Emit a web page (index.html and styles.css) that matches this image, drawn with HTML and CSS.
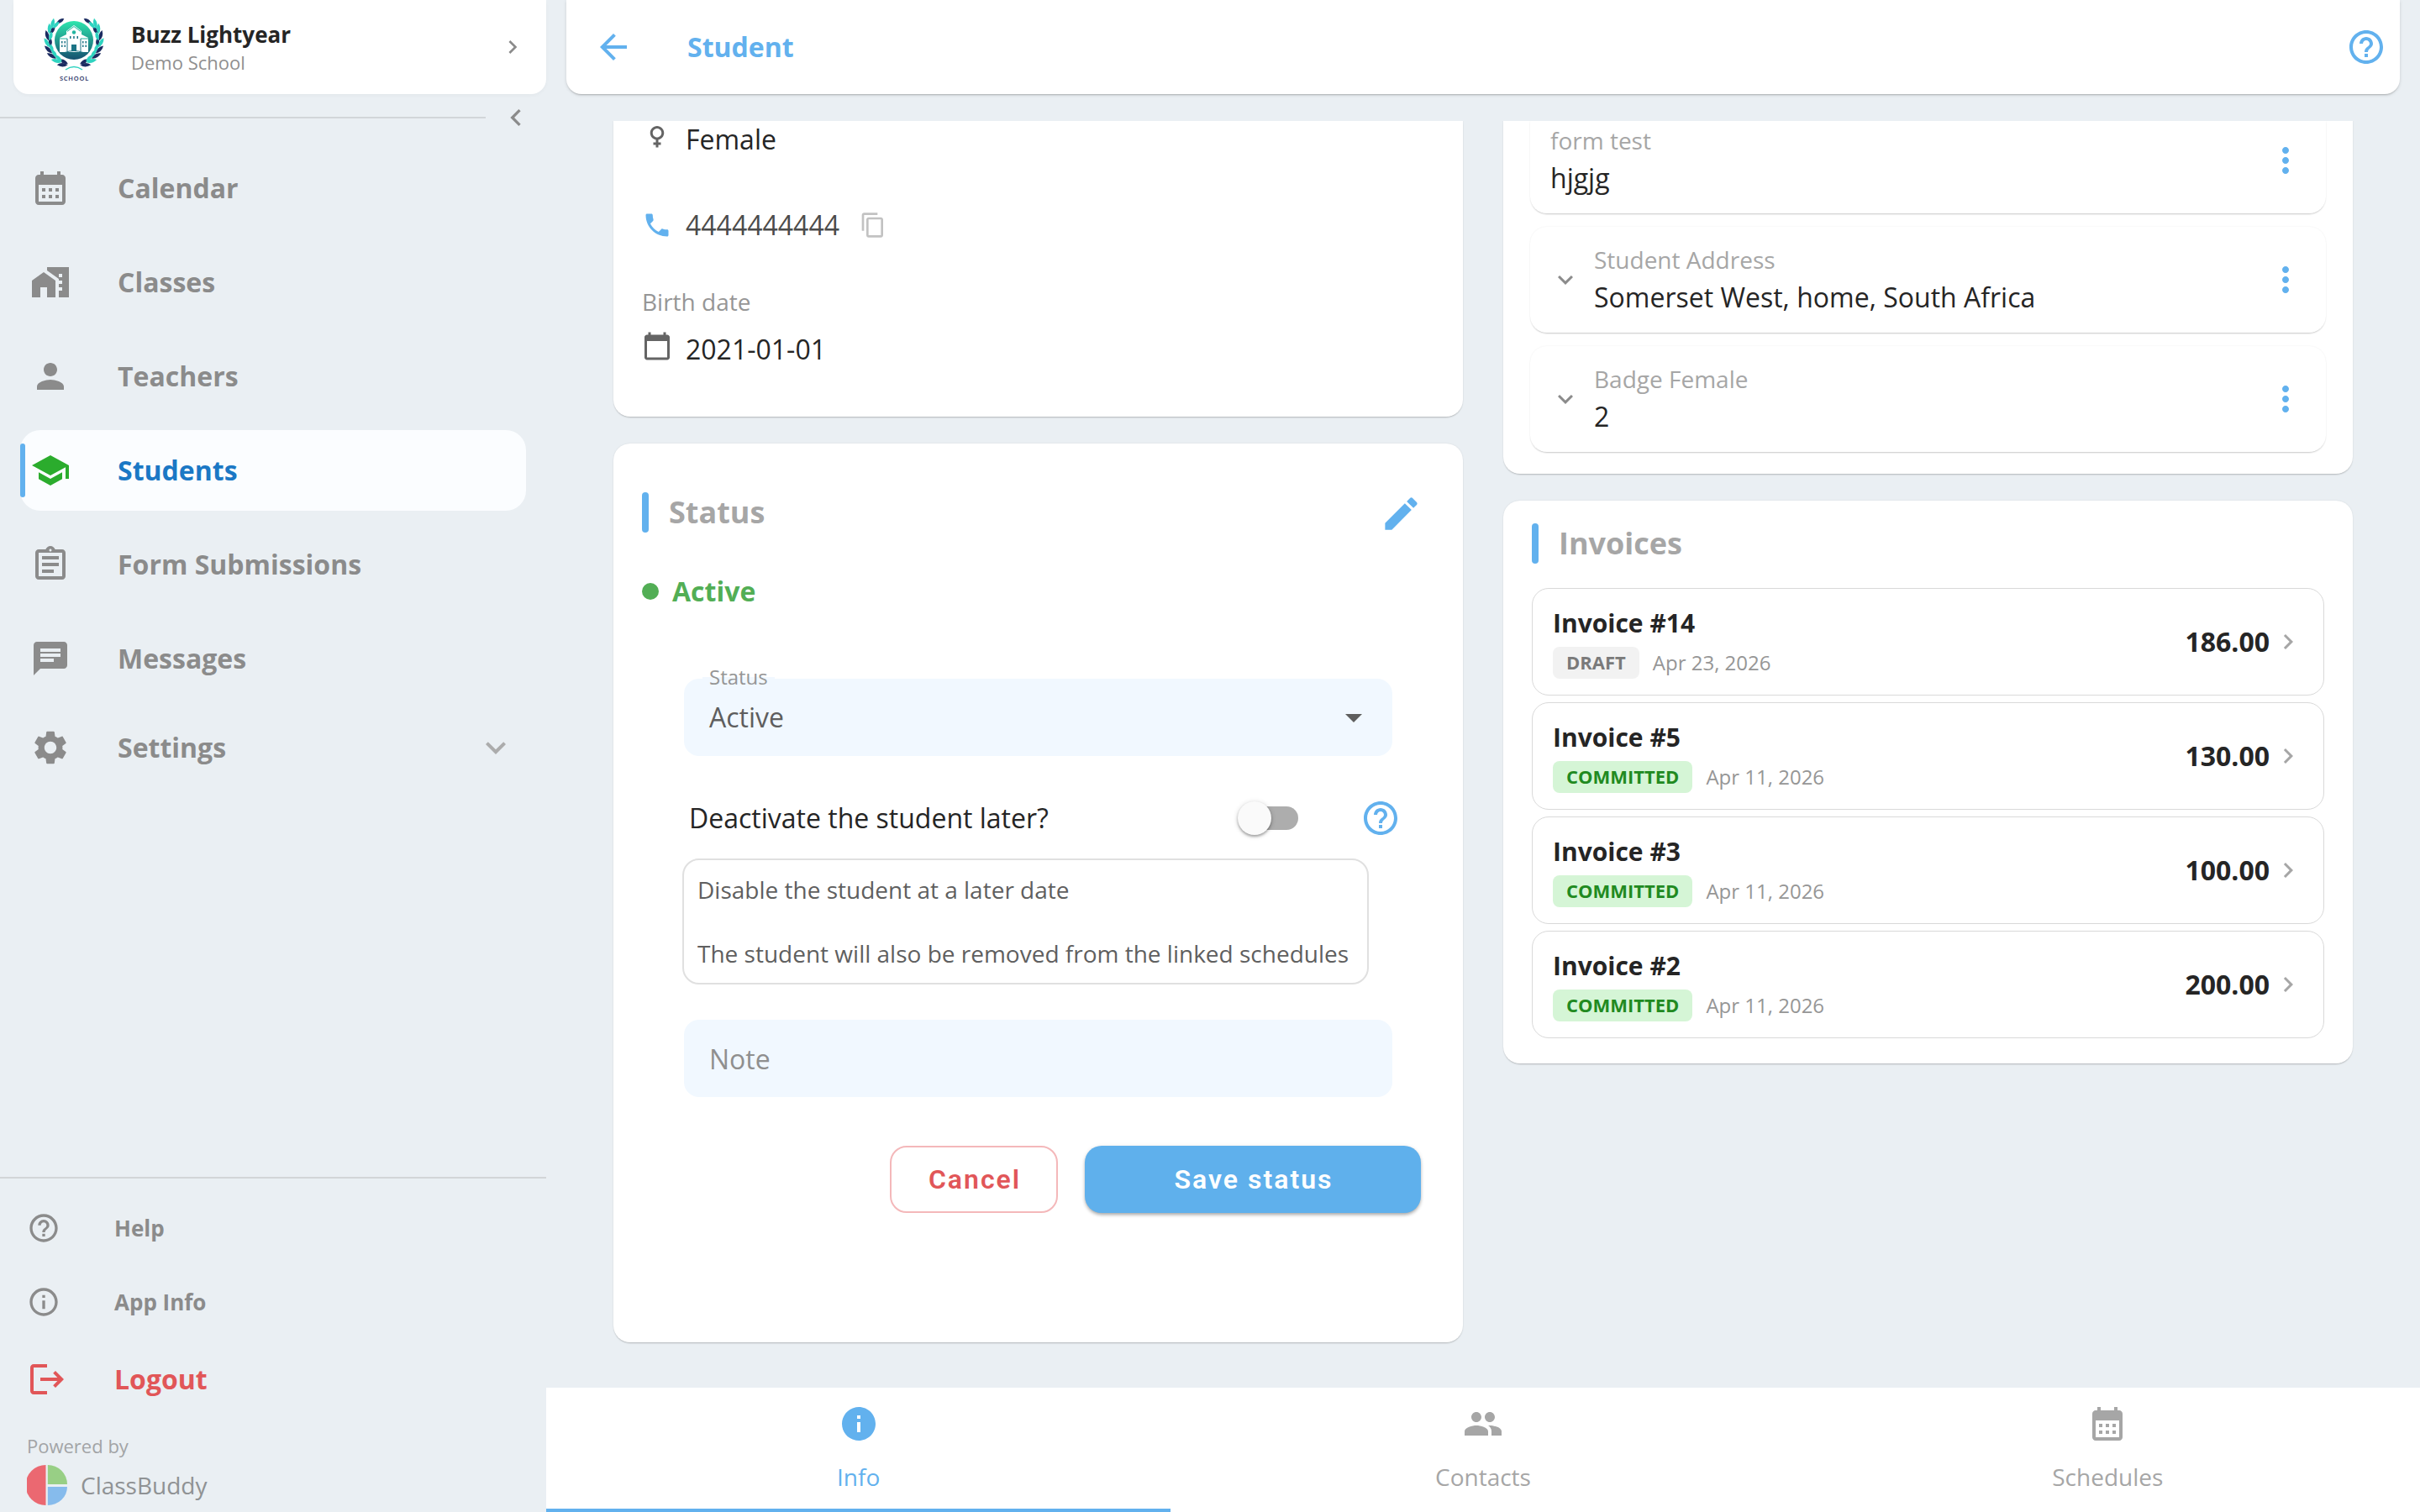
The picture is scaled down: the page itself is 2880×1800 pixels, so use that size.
FILE: index.html
```html
<!DOCTYPE html>
<html lang="en">
  <head>
    <meta charset="UTF-8" />
    <meta name="viewport" content="width=device-width, initial-scale=1.0" />
    <title>Student</title>
    <link rel="stylesheet" href="styles.css">
  </head>
  <body>
    <svg class="sprite">
      <symbol id="i-calendar" viewBox="0 0 24 24"><path d="M19 4h-1V2h-2v2H8V2H6v2H5c-1.1 0-2 .9-2 2v14c0 1.1.9 2 2 2h14c1.1 0 2-.9 2-2V6c0-1.1-.9-2-2-2zm0 16H5V10h14v10zM9 14H7v-2h2v2zm4 0h-2v-2h2v2zm4 0h-2v-2h2v2zm-8 4H7v-2h2v2zm4 0h-2v-2h2v2zm4 0h-2v-2h2v2z"/></symbol>
      <symbol id="i-home-work" viewBox="0 0 24 24"><path d="M1 11v10h5v-6h4v6h5V11L8 6z"/><path d="M10 3v1.97l7 5V11h2v2h-2v2h2v2h-2v4h6V3H10zm9 6h-2V7h2v2z"/></symbol>
      <symbol id="i-person" viewBox="0 0 24 24"><path d="M12 12c2.21 0 4-1.79 4-4s-1.79-4-4-4-4 1.79-4 4 1.79 4 4 4zm0 2c-2.67 0-8 1.34-8 4v2h16v-2c0-2.66-5.33-4-8-4z"/></symbol>
      <symbol id="i-school" viewBox="0 0 24 24"><path d="M5 13.18v4L12 21l7-3.82v-4L12 17l-7-3.82zM12 3L1 9l11 6 9-4.91V17h2V9L12 3z"/></symbol>
      <symbol id="i-assignment" viewBox="0 0 24 24"><path d="M7 15h7v2H7zm0-4h10v2H7zm0-4h10v2H7zm12-4h-4.18C14.4 1.84 13.3 1 12 1s-2.4.84-2.82 2H5c-1.1 0-2 .9-2 2v14c0 1.1.9 2 2 2h14c1.1 0 2-.9 2-2V5c0-1.1-.9-2-2-2zm-7-.25c.41 0 .75.34.75.75s-.34.75-.75.75-.75-.34-.75-.75.34-.75.75-.75zM19 19H5V5h14v14z"/></symbol>
      <symbol id="i-chat" viewBox="0 0 24 24"><path d="M20 2H4c-1.1 0-2 .9-2 2v18l4-4h14c1.1 0 2-.9 2-2V4c0-1.1-.9-2-2-2zM6 9h12v2H6V9zm8 5H6v-2h8v2zm4-6H6V6h12v2z"/></symbol>
      <symbol id="i-settings" viewBox="0 0 24 24"><path d="M19.14 12.94c.04-.3.06-.61.06-.94 0-.32-.02-.64-.07-.94l2.03-1.58c.18-.14.23-.41.12-.61l-1.92-3.32c-.12-.22-.37-.29-.59-.22l-2.39.96c-.5-.38-1.03-.7-1.62-.94l-.36-2.54c-.04-.24-.24-.41-.48-.41h-3.84c-.24 0-.43.17-.47.41l-.36 2.54c-.59.24-1.13.57-1.62.94l-2.39-.96c-.22-.08-.47 0-.59.22L2.74 8.87c-.12.21-.08.47.12.61l2.03 1.58c-.05.3-.09.63-.09.94s.02.64.07.94l-2.03 1.58c-.18.14-.23.41-.12.61l1.92 3.32c.12.22.37.29.59.22l2.39-.96c.5.38 1.03.7 1.62.94l.36 2.54c.05.24.24.41.48.41h3.84c.24 0 .44-.17.47-.41l.36-2.54c.59-.24 1.13-.56 1.62-.94l2.39.96c.22.08.47 0 .59-.22l1.92-3.32c.12-.22.07-.47-.12-.61l-2.01-1.58zM12 15.6c-1.98 0-3.6-1.62-3.6-3.6s1.62-3.6 3.6-3.6 3.6 1.62 3.6 3.6-1.62 3.6-3.6 3.6z"/></symbol>
      <symbol id="i-right" viewBox="0 0 24 24"><path d="M10 6L8.59 7.41 13.17 12l-4.58 4.59L10 18l6-6z"/></symbol>
      <symbol id="i-left" viewBox="0 0 24 24"><path d="M15.41 7.41L14 6l-6 6 6 6 1.41-1.41L10.83 12z"/></symbol>
      <symbol id="i-down" viewBox="0 0 24 24"><path d="M16.59 8.59L12 13.17 7.41 8.59 6 10l6 6 6-6z"/></symbol>
      <symbol id="i-help" viewBox="0 0 24 24"><path d="M11 18h2v-2h-2v2zm1-16C6.48 2 2 6.48 2 12s4.48 10 10 10 10-4.48 10-10S17.52 2 12 2zm0 18c-4.41 0-8-3.59-8-8s3.59-8 8-8 8 3.59 8 8-3.59 8-8 8zm0-14c-2.21 0-4 1.79-4 4h2c0-1.1.9-2 2-2s2 .9 2 2c0 2-3 1.75-3 5h2c0-2.25 3-2.5 3-5 0-2.21-1.79-4-4-4z"/></symbol>
      <symbol id="i-info-outline" viewBox="0 0 24 24"><path d="M11 7h2v2h-2zm0 4h2v6h-2zm1-9C6.48 2 2 6.48 2 12s4.48 10 10 10 10-4.48 10-10S17.52 2 12 2zm0 18c-4.41 0-8-3.59-8-8s3.59-8 8-8 8 3.59 8 8-3.59 8-8 8z"/></symbol>
      <symbol id="i-info" viewBox="0 0 24 24"><path d="M12 2C6.48 2 2 6.48 2 12s4.48 10 10 10 10-4.48 10-10S17.52 2 12 2zm1 15h-2v-6h2v6zm0-8h-2V7h2v2z"/></symbol>
      <symbol id="i-logout" viewBox="0 0 24 24"><path d="M17 7l-1.41 1.41L18.17 11H8v2h10.17l-2.58 2.58L17 17l5-5zM4 5h8V3H4c-1.1 0-2 .9-2 2v14c0 1.1.9 2 2 2h8v-2H4V5z"/></symbol>
      <symbol id="i-back" viewBox="0 0 24 24"><path d="M20 11H7.83l5.59-5.59L12 4l-8 8 8 8 1.41-1.41L7.83 13H20v-2z"/></symbol>
      <symbol id="i-female" viewBox="0 0 24 24"><path d="M17.5 9.5C17.5 6.46 15.04 4 12 4S6.5 6.46 6.5 9.5c0 2.7 1.94 4.93 4.5 5.4V17H9v2h2v2h2v-2h2v-2h-2v-2.1c2.56-.47 4.5-2.7 4.5-5.4zm-9 0C8.5 7.57 10.07 6 12 6s3.5 1.57 3.5 3.5S13.93 13 12 13s-3.5-1.57-3.5-3.5z"/></symbol>
      <symbol id="i-phone" viewBox="0 0 24 24"><path d="M6.62 10.79c1.44 2.83 3.76 5.14 6.59 6.59l2.2-2.2c.27-.27.67-.36 1.02-.24 1.12.37 2.33.57 3.57.57.55 0 1 .45 1 1V20c0 .55-.45 1-1 1-9.39 0-17-7.61-17-17 0-.55.45-1 1-1h3.5c.55 0 1 .45 1 1 0 1.25.2 2.45.57 3.57.11.35.03.74-.25 1.02l-2.2 2.2z"/></symbol>
      <symbol id="i-copy" viewBox="0 0 24 24"><path d="M16 1H4c-1.1 0-2 .9-2 2v14h2V3h12V1zm3 4H8c-1.1 0-2 .9-2 2v14c0 1.1.9 2 2 2h11c1.1 0 2-.9 2-2V7c0-1.1-.9-2-2-2zm0 16H8V7h11v14z"/></symbol>
      <symbol id="i-today" viewBox="0 0 24 24"><path d="M20 3h-1V1h-2v2H7V1H5v2H4c-1.1 0-2 .9-2 2v16c0 1.1.9 2 2 2h16c1.1 0 2-.9 2-2V5c0-1.1-.9-2-2-2zm0 18H4V8h16v13z"/></symbol>
      <symbol id="i-edit" viewBox="0 0 24 24"><path d="M3 17.25V21h3.75L17.81 9.94l-3.75-3.75L3 17.25zM20.71 7.04c.39-.39.39-1.02 0-1.41l-2.34-2.34c-.39-.39-1.02-.39-1.41 0l-1.83 1.83 3.75 3.75 1.83-1.83z"/></symbol>
      <symbol id="i-drop" viewBox="0 0 24 24"><path d="M7 10l5 5 5-5z"/></symbol>
      <symbol id="i-more" viewBox="0 0 24 24"><path d="M12 8c1.1 0 2-.9 2-2s-.9-2-2-2-2 .9-2 2 .9 2 2 2zm0 2c-1.1 0-2 .9-2 2s.9 2 2 2 2-.9 2-2-.9-2-2-2zm0 6c-1.1 0-2 .9-2 2s.9 2 2 2 2-.9 2-2-.9-2-2-2z"/></symbol>
      <symbol id="i-people" viewBox="0 0 24 24"><path d="M16 11c1.66 0 2.99-1.34 2.99-3S17.66 5 16 5s-3 1.34-3 3 1.34 3 3 3zm-8 0c1.66 0 2.99-1.34 2.99-3S9.66 5 8 5 5 6.34 5 8s1.34 3 3 3zm0 2c-2.33 0-7 1.17-7 3.5V19h14v-2.5c0-2.33-4.67-3.5-7-3.5zm8 0c-.29 0-.62.02-.97.05 1.16.84 1.97 1.97 1.97 3.45V19h6v-2.5c0-2.33-4.67-3.5-7-3.5z"/></symbol>
    </svg>

    <div class="app">
      <aside class="sidebar">
        <div class="profile">
          <svg class="school-logo" viewBox="0 0 72 80">
            <defs>
              <linearGradient id="crest" x1="0" y1="0" x2="0" y2="1">
                <stop offset="0" stop-color="#2ee6ae"/>
                <stop offset="1" stop-color="#16506f"/>
              </linearGradient>
              <path id="leaf-out" d="M39 60q-4 6-12 4.500q4-6.500 12-4.500z"/>
              <path id="leaf-in" d="M39 59q-5-5-11-2q3 5 11 2z"/>
              <g id="branch">
                <g fill="#1b2b60">
                  <use href="#leaf-out" transform="rotate(20 36 30)"/>
                  <use href="#leaf-in" transform="rotate(20 36 30)"/>
                  <use href="#leaf-out" transform="rotate(50 36 30)"/>
                  <use href="#leaf-out" transform="rotate(65 36 30)"/>
                  <use href="#leaf-in" transform="rotate(80 36 30)"/>
                  <use href="#leaf-out" transform="rotate(95 36 30)"/>
                  <use href="#leaf-in" transform="rotate(110 36 30)"/>
                  <use href="#leaf-in" transform="rotate(139 36 30)"/>
                </g>
                <g fill="#2fd3c0">
                  <use href="#leaf-out" transform="rotate(35 36 30)"/>
                  <use href="#leaf-in" transform="rotate(35 36 30)"/>
                  <use href="#leaf-in" transform="rotate(50 36 30)"/>
                  <use href="#leaf-in" transform="rotate(65 36 30)"/>
                  <use href="#leaf-out" transform="rotate(80 36 30)"/>
                  <use href="#leaf-in" transform="rotate(95 36 30)"/>
                  <use href="#leaf-out" transform="rotate(110 36 30)"/>
                  <use href="#leaf-in" transform="rotate(125 36 30)"/>
                  <use href="#leaf-out" transform="rotate(123 36 30)"/>
                </g>
              </g>
            </defs>
            <use href="#branch"/>
            <use href="#branch" transform="matrix(-1 0 0 1 72 0)"/>
            <path d="M26 65q10-7 20 0" fill="none" stroke="#2fd3c0" stroke-width="1.5"/>
            <circle cx="36" cy="30" r="23" fill="url(#crest)"/>
            <path d="M36 12l-9 7v4l-8 4v17h34V27l-8-4v-4z" fill="#fff"/>
            <path d="M28 19.500l8-6 8 6M19 28h9M44 28h9" fill="none" stroke="#23b5a0" stroke-width="1"/>
            <circle cx="36" cy="20.500" r="2.200" fill="#23b5a0"/>
            <path d="M31 25h1.500v3H31zM35.200 25h1.500v3h-1.500zM39.500 25H41v3h-1.500zM21 31h1.500v2.500H21zM24.500 31H26v2.500h-1.500zM46 31h1.500v2.500H46zM49.500 31H51v2.500h-1.500zM21 35.500h1.500V38H21zM24.500 35.500H26V38h-1.500zM46 35.500h1.500V38H46zM49.500 35.500H51V38h-1.500zM33 35h6v8h-6z" fill="#1c7385"/>
            <path d="M28 28v15M44 28v15M25 44.500q11-4 22 0" fill="none" stroke="#1c7385"/>
            <text class="logo-text" x="36.5" y="78.2" text-anchor="middle">SCHOOL</text>
          </svg>
          <div class="profile-text">
            <div class="profile-name">Buzz Lightyear</div>
            <div class="profile-school">Demo School</div>
          </div>
          <svg class="icon profile-arrow"><use href="#i-right"/></svg>
        </div>

        <div class="collapse">
          <div class="collapse-line"></div>
          <svg class="icon collapse-arrow"><use href="#i-left"/></svg>
        </div>

        <nav class="menu">
          <a class="menu-item"><svg class="icon"><use href="#i-calendar"/></svg><span>Calendar</span></a>
          <a class="menu-item"><svg class="icon"><use href="#i-home-work"/></svg><span>Classes</span></a>
          <a class="menu-item"><svg class="icon"><use href="#i-person"/></svg><span>Teachers</span></a>
          <a class="menu-item selected"><svg class="icon"><use href="#i-school"/></svg><span>Students</span></a>
          <a class="menu-item"><svg class="icon"><use href="#i-assignment"/></svg><span>Form Submissions</span></a>
          <a class="menu-item"><svg class="icon"><use href="#i-chat"/></svg><span>Messages</span></a>
          <a class="menu-item settings"><svg class="icon"><use href="#i-settings"/></svg><span>Settings</span><svg class="icon expand"><use href="#i-down"/></svg></a>
        </nav>

        <div class="side-footer">
          <a class="foot-item"><svg class="icon"><use href="#i-help"/></svg><span>Help</span></a>
          <a class="foot-item"><svg class="icon"><use href="#i-info-outline"/></svg><span>App Info</span></a>
          <a class="foot-item logout"><svg class="icon"><use href="#i-logout"/></svg><span>Logout</span></a>
          <div class="powered">Powered by</div>
          <div class="brand">
            <svg class="brand-logo" viewBox="0 0 48 48">
              <path d="M22.500 0a24 24 0 0 0 0 48z" fill="#eb6871"/>
              <path d="M24.800 0a23.200 23 0 0 1 23.200 23H24.800z" fill="#98cf85"/>
              <path d="M24.800 26H48a23.200 22 0 0 1-23.200 22z" fill="#86bbec"/>
            </svg>
            <span>ClassBuddy</span>
          </div>
        </div>
      </aside>

      <main class="main">
        <header class="topbar">
          <svg class="icon"><use href="#i-back"/></svg>
          <h1>Student</h1>
          <svg class="icon"><use href="#i-help"/></svg>
        </header>

        <div class="content">
          <div class="column">
            <section class="card details">
              <div class="detail-row">
                <svg class="icon"><use href="#i-female"/></svg>
                <span>Female</span>
              </div>
              <div class="detail-row phone">
                <svg class="icon"><use href="#i-phone"/></svg>
                <span>4444444444</span>
                <svg class="icon copy"><use href="#i-copy"/></svg>
              </div>
              <div class="detail-label">Birth date</div>
              <div class="detail-row">
                <svg class="icon"><use href="#i-today"/></svg>
                <span>2021-01-01</span>
              </div>
            </section>

            <section class="card status">
              <div class="card-head">
                <div class="head-bar"></div>
                <h2>Status</h2>
                <svg class="icon edit"><use href="#i-edit"/></svg>
              </div>
              <div class="status-now"><span class="dot"></span>Active</div>
              <div class="select">
                <label>Status</label>
                <span>Active</span>
                <svg class="icon"><use href="#i-drop"/></svg>
              </div>
              <div class="toggle-row">
                <span>Deactivate the student later?</span>
                <div class="switch"><div class="thumb"></div></div>
                <svg class="icon"><use href="#i-help"/></svg>
              </div>
              <div class="hint">
                <p>Disable the student at a later date</p>
                <p>The student will also be removed from the linked schedules</p>
              </div>
              <div class="note">Note</div>
              <div class="actions">
                <button class="btn cancel">Cancel</button>
                <button class="btn save">Save status</button>
              </div>
            </section>
          </div>

          <div class="column">
            <section class="card forms">
              <div class="form-item first">
                <div class="form-text">
                  <div class="form-label">form test</div>
                  <div class="form-value">hjgjg</div>
                </div>
                <svg class="icon more"><use href="#i-more"/></svg>
              </div>
              <div class="form-item">
                <svg class="icon chevron"><use href="#i-down"/></svg>
                <div class="form-text">
                  <div class="form-label">Student Address</div>
                  <div class="form-value">Somerset West, home, South Africa</div>
                </div>
                <svg class="icon more"><use href="#i-more"/></svg>
              </div>
              <div class="form-item">
                <svg class="icon chevron"><use href="#i-down"/></svg>
                <div class="form-text">
                  <div class="form-label">Badge Female</div>
                  <div class="form-value">2</div>
                </div>
                <svg class="icon more"><use href="#i-more"/></svg>
              </div>
            </section>

            <section class="card invoices">
              <div class="card-head">
                <div class="head-bar"></div>
                <h2>Invoices</h2>
              </div>
              <div class="invoice">
                <div class="invoice-info">
                  <div class="invoice-name">Invoice #14</div>
                  <div class="invoice-meta"><span class="badge">DRAFT</span><span>Apr 23, 2026</span></div>
                </div>
                <div class="amount">186.00</div>
                <svg class="icon"><use href="#i-right"/></svg>
              </div>
              <div class="invoice">
                <div class="invoice-info">
                  <div class="invoice-name">Invoice #5</div>
                  <div class="invoice-meta"><span class="badge committed">COMMITTED</span><span>Apr 11, 2026</span></div>
                </div>
                <div class="amount">130.00</div>
                <svg class="icon"><use href="#i-right"/></svg>
              </div>
              <div class="invoice">
                <div class="invoice-info">
                  <div class="invoice-name">Invoice #3</div>
                  <div class="invoice-meta"><span class="badge committed">COMMITTED</span><span>Apr 11, 2026</span></div>
                </div>
                <div class="amount">100.00</div>
                <svg class="icon"><use href="#i-right"/></svg>
              </div>
              <div class="invoice">
                <div class="invoice-info">
                  <div class="invoice-name">Invoice #2</div>
                  <div class="invoice-meta"><span class="badge committed">COMMITTED</span><span>Apr 11, 2026</span></div>
                </div>
                <div class="amount">200.00</div>
                <svg class="icon"><use href="#i-right"/></svg>
              </div>
            </section>
          </div>
        </div>

        <nav class="tabs">
          <a class="tab active"><svg class="icon"><use href="#i-info"/></svg><span>Info</span></a>
          <a class="tab"><svg class="icon"><use href="#i-people"/></svg><span>Contacts</span></a>
          <a class="tab"><svg class="icon"><use href="#i-calendar"/></svg><span>Schedules</span></a>
        </nav>
      </main>
    </div>
  </body>
</html>
```

FILE: styles.css
```css
* {
  box-sizing: border-box;
}

body {
  margin: 0;
  font-family: "Open Sans", sans-serif;
  font-size: 32px;
  line-height: 44px;
  color: #252525;
  background: #eaeff3;
}

h1,
h2,
p {
  margin: 0;
}

.sprite {
  display: none;
}

.icon {
  display: block;
  flex: none;
  width: 48px;
  height: 48px;
  fill: currentColor;
}

.app {
  display: flex;
  width: 2880px;
  height: 1800px;
  overflow: hidden;
}

/* sidebar */

.sidebar {
  display: flex;
  flex-direction: column;
  width: 650px;
  color: #8b8b8b;
}

.profile {
  display: flex;
  align-items: center;
  height: 112px;
  margin-left: 16px;
  padding: 0 24px 0 36px;
  background: #fff;
  border-radius: 0 0 18px 18px;
  box-shadow: 0 2px 4px rgba(0, 0, 0, 0.03);
}

.school-logo {
  width: 72px;
  height: 80px;
  margin-top: 4px;
}

.logo-text {
  font-size: 7.5px;
  font-weight: 600;
  letter-spacing: 0.8px;
  fill: #1b2b60;
}

.profile-text {
  flex: 1;
  margin-left: 32px;
}

.profile-name {
  font-size: 26px;
  font-weight: 700;
  line-height: 36px;
  color: #252525;
}

.profile-school {
  font-size: 22px;
  line-height: 30px;
  color: #8f8f8f;
}

.profile-arrow {
  width: 32px;
  height: 32px;
}

.collapse {
  display: flex;
  align-items: center;
  justify-content: space-between;
  height: 40px;
  margin-top: 8px;
  padding-right: 16px;
}

.collapse-line {
  width: 578px;
  height: 2px;
  background: #d2d6d9;
}

.collapse-arrow {
  width: 40px;
  height: 40px;
}

.menu {
  flex: 1;
  padding: 16px 24px 0;
}

.menu-item {
  display: flex;
  align-items: center;
  height: 96px;
  margin-bottom: 16px;
  padding: 0 12px;
  font-weight: 700;
  border-radius: 24px;
}

.menu-item span {
  flex: 1;
  margin-left: 56px;
}

.menu-item.selected {
  padding-left: 0;
  color: #1b78c5;
  background: #fbfdff;
}

.menu-item.selected::before {
  content: "";
  width: 6px;
  height: 64px;
  margin-right: 6px;
  background: #62b1ee;
  border-radius: 3px;
}

.menu-item.selected .icon {
  color: #2bac2d;
}

.menu-item.settings {
  margin-top: -6px;
}

.menu-item .expand {
  color: #acacac;
}

.side-footer {
  height: 399px;
  border-top: 2px solid #d2d5d7;
  padding: 15px 32px 0;
}

.foot-item {
  display: flex;
  align-items: center;
  height: 88px;
  font-size: 26px;
  font-weight: 700;
}

.foot-item .icon {
  width: 40px;
  height: 40px;
}

.foot-item span {
  margin-left: 64px;
}

.foot-item.logout {
  height: 96px;
  font-size: 32px;
  color: #e15658;
}

.foot-item.logout .icon {
  width: 48px;
  height: 48px;
}

.foot-item.logout span {
  margin-left: 56px;
}

.powered {
  margin-top: 16px;
  font-size: 22px;
  line-height: 30px;
  color: #a2a4a6;
}

.brand {
  display: flex;
  align-items: center;
  gap: 16px;
  margin-top: 8px;
  font-size: 28px;
  color: #8f9294;
}

.brand-logo {
  width: 48px;
  height: 48px;
}

/* main area */

.main {
  display: flex;
  flex-direction: column;
  width: 2230px;
}

.topbar {
  display: flex;
  align-items: center;
  height: 112px;
  margin: 0 24px;
  padding: 0 16px 0 32px;
  color: #62b1ee;
  background: #fff;
  border-radius: 0 0 18px 18px;
  box-shadow: 0 2px 2px -1px rgba(0, 0, 0, 0.2), 0 1px 4px rgba(0, 0, 0, 0.12);
}

.topbar h1 {
  flex: 1;
  margin-left: 64px;
  font-size: 32px;
  font-weight: 700;
}

.content {
  display: flex;
  gap: 48px;
  height: 1508px;
  margin-top: 32px;
  padding: 0 80px;
  overflow: hidden;
}

.column {
  display: flex;
  flex: 1;
  flex-direction: column;
  gap: 32px;
  min-width: 0;
}

.card {
  flex: none;
  background: #fff;
  border-radius: 20px;
  box-shadow: 0 2px 2px -1px rgba(0, 0, 0, 0.22), 0 0 2px rgba(0, 0, 0, 0.1);
}

/* the first cards are scrolled under the top bar */
.details,
.forms {
  border-radius: 0 0 20px 20px;
}

.details {
  height: 352px;
  padding: 0 34px;
}

.detail-row {
  display: flex;
  gap: 16px;
}

.detail-row .icon {
  width: 36px;
  height: 36px;
  color: #646464;
}

.detail-row.phone {
  align-items: center;
  height: 48px;
  margin-top: 56px;
  color: #4b4b4b;
}

.detail-row.phone .icon {
  color: #62b1ee;
}

.detail-row.phone .copy {
  width: 32px;
  height: 32px;
  margin-left: 8px;
  color: #c2c2c2;
}

.detail-label {
  margin: 48px 0 16px;
  font-size: 28px;
  line-height: 38px;
  color: #969696;
}

.status {
  height: 1070px;
  padding: 58px 34px 0;
}

.card-head {
  display: flex;
  align-items: center;
  height: 48px;
}

.head-bar {
  width: 8px;
  height: 48px;
  background: #62b1ee;
  border-radius: 4px;
}

.card-head h2 {
  flex: 1;
  margin-left: 24px;
  font-size: 36px;
  font-weight: 700;
  line-height: 48px;
  color: #a6a6a6;
}

.edit {
  width: 51px;
  height: 51px;
  margin: 2px 14px 0 0;
  color: #62b1ee;
}

.status-now {
  display: flex;
  align-items: center;
  margin-top: 48px;
  font-weight: 700;
  color: #52ae55;
}

.dot {
  width: 20px;
  height: 20px;
  margin-right: 16px;
  border-radius: 50%;
  background: #52ae55;
}

.select,
.note {
  display: flex;
  align-items: center;
  width: 843px;
  height: 92px;
  margin-left: 50px;
  padding: 0 22px 0 30px;
  background: #f1f8ff;
  border-radius: 18px;
}

.select {
  position: relative;
  justify-content: space-between;
  margin-top: 82px;
  color: #5e5e5e;
}

.select label {
  position: absolute;
  top: -18px;
  left: 22px;
  padding: 0 8px;
  font-size: 24px;
  line-height: 32px;
  color: #969696;
  background: linear-gradient(#f1f8ff, #f1f8ff) 0 16px / 100% 2px no-repeat;
}

.toggle-row {
  display: flex;
  align-items: center;
  height: 96px;
  margin: 26px 0 0 56px;
}

.toggle-row span {
  flex: 1;
}

.toggle-row .icon {
  margin: 0 40px 0 74px;
  color: #62b1ee;
}

.switch {
  display: flex;
  align-items: center;
  width: 66px;
  height: 28px;
  background: #adadad;
  border-radius: 14px;
}

.thumb {
  width: 40px;
  height: 40px;
  margin-left: -6px;
  background: #fafafa;
  border-radius: 50%;
  box-shadow: 0 2px 3px rgba(0, 0, 0, 0.3), 0 1px 6px rgba(0, 0, 0, 0.16);
}

.hint {
  display: flex;
  flex-direction: column;
  gap: 38px;
  width: 817px;
  height: 150px;
  margin-left: 48px;
  padding: 16px;
  font-size: 28px;
  line-height: 38px;
  color: #5f5f5f;
  white-space: nowrap;
  border: 2px solid #e0e0e0;
  border-radius: 20px;
}

.note {
  margin-top: 42px;
  padding-top: 2px;
  color: #8f8f8f;
}

.actions {
  display: flex;
  justify-content: flex-end;
  gap: 32px;
  margin: 58px 16px 0 0;
}

.btn {
  width: 200px;
  height: 80px;
  padding: 0 0 0 2px;
  font-family: Roboto, sans-serif;
  font-size: 32px;
  font-weight: 600;
  letter-spacing: 2px;
  border: none;
  border-radius: 20px;
}

.cancel {
  color: #e15658;
  background: #fff;
  border: 2px solid #f4b8ba;
}

.save {
  width: 400px;
  color: #fff;
  background: #5fb0ec;
  box-shadow: 0 3px 4px -1px rgba(0, 0, 0, 0.3), 0 1px 5px rgba(0, 0, 0, 0.12);
}

/* form submissions */

.forms {
  display: flex;
  flex-direction: column;
  gap: 16px;
  height: 420px;
  padding: 0 32px;
}

.form-item {
  display: flex;
  align-items: center;
  height: 126px;
  padding: 0 24px;
  border-radius: 20px;
  box-shadow: 0 2px 2px -1px rgba(0, 0, 0, 0.2), 0 0 2px rgba(0, 0, 0, 0.08);
}

.form-item.first {
  height: 110px;
  padding-bottom: 16px;
  border-radius: 0 0 20px 20px;
}

.chevron {
  width: 36px;
  height: 36px;
  margin-right: 16px;
  color: #8b8b8b;
}

.form-text {
  flex: 1;
}

.form-label {
  margin-bottom: 4px;
  font-size: 28px;
  line-height: 38px;
  color: #a6a6a6;
}

.more {
  color: #62b1ee;
}

/* invoices */

.invoices {
  display: flex;
  flex-direction: column;
  gap: 8px;
  height: 670px;
  padding: 27px 34px 0;
}

.invoices .card-head {
  margin-bottom: 21px;
}

.invoice {
  display: flex;
  align-items: center;
  height: 128px;
  padding: 0 24px;
  border: 1px solid #d9d9d9;
  border-radius: 20px;
}

.invoice-info {
  flex: 1;
}

.invoice-name {
  margin-bottom: 8px;
  font-size: 30px;
  font-weight: 700;
  line-height: 41px;
}

.invoice-meta {
  display: flex;
  align-items: center;
  gap: 16px;
  font-size: 24px;
  line-height: 38px;
  color: #969696;
}

.badge {
  height: 38px;
  padding: 0 16px;
  font-size: 22px;
  font-weight: 700;
  line-height: 37px;
  color: #7a7a7a;
  background: #f2f2f2;
  border-radius: 8px;
}

.badge.committed {
  color: #218a21;
  background: #d5f5d6;
}

.amount {
  margin-right: 4px;
  font-weight: 700;
}

.invoice .icon {
  width: 36px;
  height: 36px;
  color: #a6a6a6;
}

/* bottom tabs */

.tabs {
  display: flex;
  height: 148px;
  background: #fff;
}

.tab {
  display: flex;
  flex: 1;
  flex-direction: column;
  align-items: center;
  padding-top: 19px;
  font-size: 28px;
  line-height: 38px;
  color: #a6a6a6;
  border-bottom: 4px solid transparent;
}

.tab span {
  margin-top: 20px;
}

.tab.active {
  color: #62b1ee;
  border-color: #62b1ee;
}
```
